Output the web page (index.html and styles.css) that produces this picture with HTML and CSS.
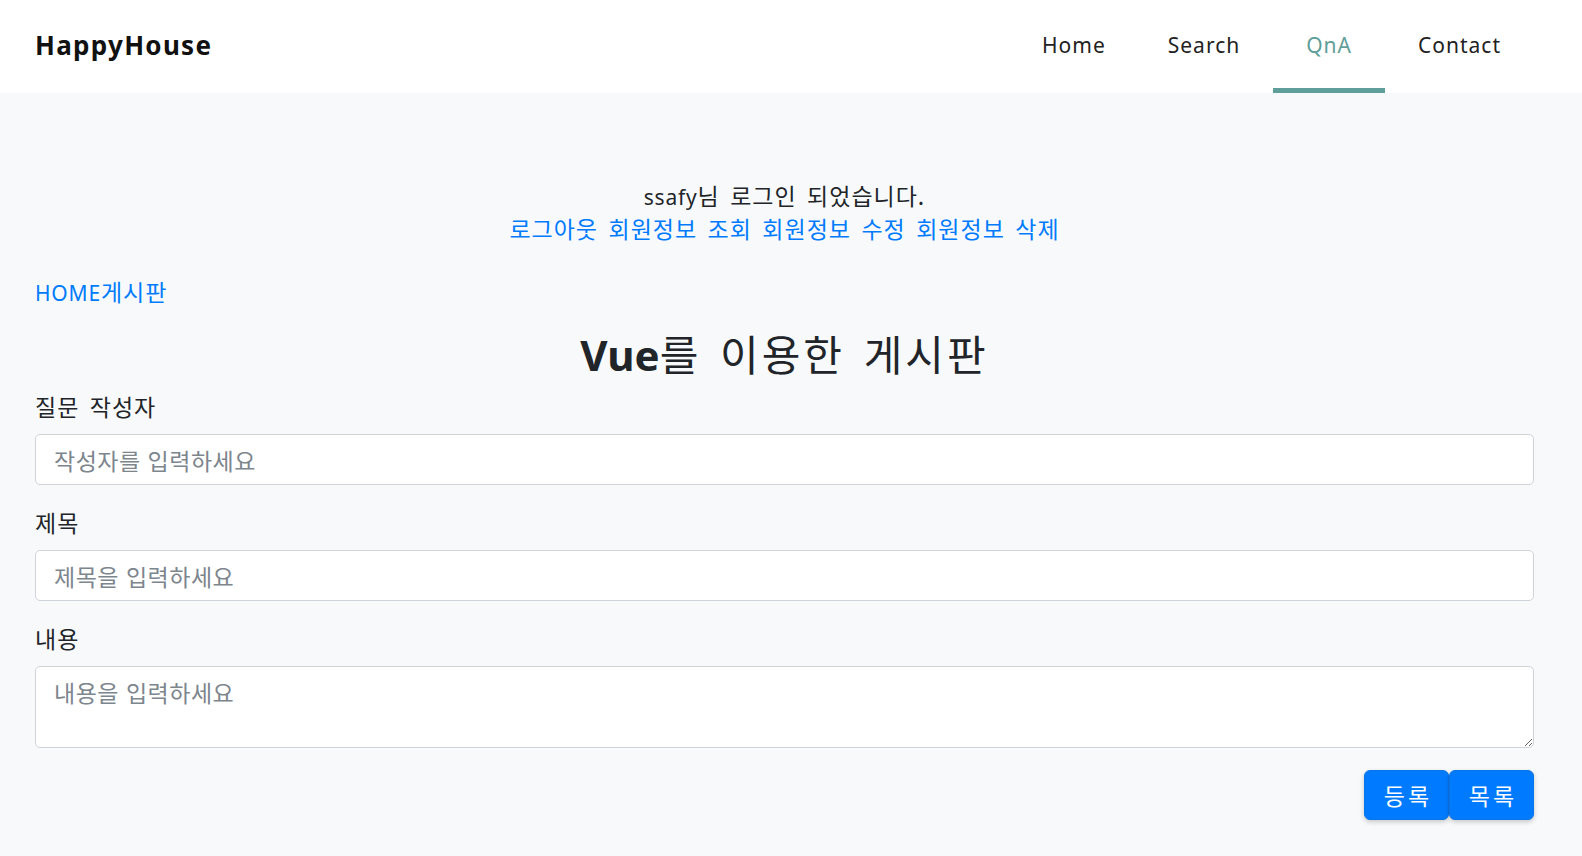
FILE: index.html
```html
<!DOCTYPE html>
<html lang="ko">
<head>
<meta charset="utf-8">
<title>HappyHouse</title>
<link rel="stylesheet" href="styles.css">
</head>
<body>
<header class="topbar">
  <div class="brand">HappyHouse</div>
  <nav class="menu">
    <a class="menu-item" href="#">Home</a>
    <a class="menu-item" href="#">Search</a>
    <a class="menu-item active" href="#">QnA</a>
    <a class="menu-item" href="#">Contact</a>
  </nav>
</header>
<main class="page">
  <section class="login-info">
    <div class="welcome">ssafy<span class="ko">님 로그인 되었습니다.</span></div>
    <div class="account-links ko">
      <a href="#">로그아웃</a>
      <a href="#">회원정보 조회</a>
      <a href="#">회원정보 수정</a>
      <a href="#">회원정보 삭제</a>
    </div>
  </section>
  <div class="crumbs"><a href="#">HOME</a><a class="ko" href="#">게시판</a></div>
  <h1 class="title"><span class="latin">Vue</span><span class="ko">를 이용한 게시판</span></h1>
  <form class="qna-form">
    <label class="field-label ko first">질문 작성자</label>
    <input class="field ko" type="text" placeholder="작성자를 입력하세요">
    <label class="field-label ko">제목</label>
    <input class="field ko" type="text" placeholder="제목을 입력하세요">
    <label class="field-label ko">내용</label>
    <textarea class="field area ko" placeholder="내용을 입력하세요"></textarea>
    <div class="actions">
      <button class="btn ko" type="button">등록</button>
      <button class="btn ko" type="button">목록</button>
    </div>
  </form>
</main>
</body>
</html>
```
FILE: styles.css
```css
* { box-sizing: border-box; }
html, body {
  margin: 0;
  padding: 0;
}
body {
  background: #f8f9fa;
  color: #212529;
  font-family: "Noto Sans", "Noto Sans CJK KR", sans-serif;
  font-size: 21px;
  letter-spacing: 0.8px;
}
a { color: #007bff; text-decoration: none; }
.ko {
  font-family: "Noto Sans CJK KR", "Noto Sans", sans-serif;
  font-size: 23px;
  letter-spacing: 1px;
  word-spacing: 3px;
}

.topbar {
  height: 93px;
  background: #fff;
  display: flex;
  align-items: stretch;
  justify-content: space-between;
  padding: 0 48px 0 35px;
}
.brand {
  display: flex;
  align-items: center;
  font-size: 26px;
  font-weight: 700;
  color: #111;
  letter-spacing: 1.3px;
  padding-bottom: 4px;
}
.menu {
  display: flex;
  align-items: stretch;
}
.menu-item {
  display: flex;
  align-items: center;
  padding: 3px 33px 2px;
  color: #222;
  font-size: 21px;
  letter-spacing: 1px;
  border-bottom: 5px solid transparent;
}
.menu-item:first-child { padding-left: 39px; padding-right: 29px; }
.menu-item.active {
  color: #5f9e99;
  border-bottom-color: #5f9e99;
}

.page {
  padding: 0 48px 40px 35px;
}
.login-info {
  text-align: center;
  padding-top: 89px;
  line-height: 32px;
}
.welcome { line-height: 30px; }
.welcome .ko { line-height: 1; }
.crumbs {
  margin-top: 34px;
  line-height: 30px;
}
.crumbs .ko { line-height: 1; }
.title {
  text-align: center;
  font-size: 42px;
  font-weight: 400;
  margin: 19px 0 0;
  line-height: 56px;
}
.title .latin { font-weight: 700; letter-spacing: 0; }
.title .ko { font-size: 42px; letter-spacing: 3px; word-spacing: 4px; line-height: 1; }
.qna-form {
  display: flex;
  flex-direction: column;
}
.field-label {
  line-height: 30px;
  margin-top: 22px;
  margin-bottom: 13px;
}
.field-label.first { margin-top: 8px; }
.field {
  height: 51px;
  border: 1px solid #ced4da;
  border-radius: 5px;
  background: #fff;
  padding: 0 18px;
  color: #495057;
  outline: none;
  letter-spacing: 0.5px;
  word-spacing: 0;
}
.field::placeholder { color: #7d858d; }
.field.area {
  height: 82px;
  padding-top: 8px;
  resize: vertical;
}
.actions {
  display: flex;
  justify-content: flex-end;
  margin-top: 22px;
}
.btn {
  width: 85px;
  height: 50px;
  background: #007bff;
  color: #fff;
  border: 1px solid #0b74e6;
  border-radius: 6px;
  letter-spacing: 3px;
  padding: 0 0 0 3px;
  box-shadow: 0 2px 5px rgba(0,0,0,0.2);
}
```
